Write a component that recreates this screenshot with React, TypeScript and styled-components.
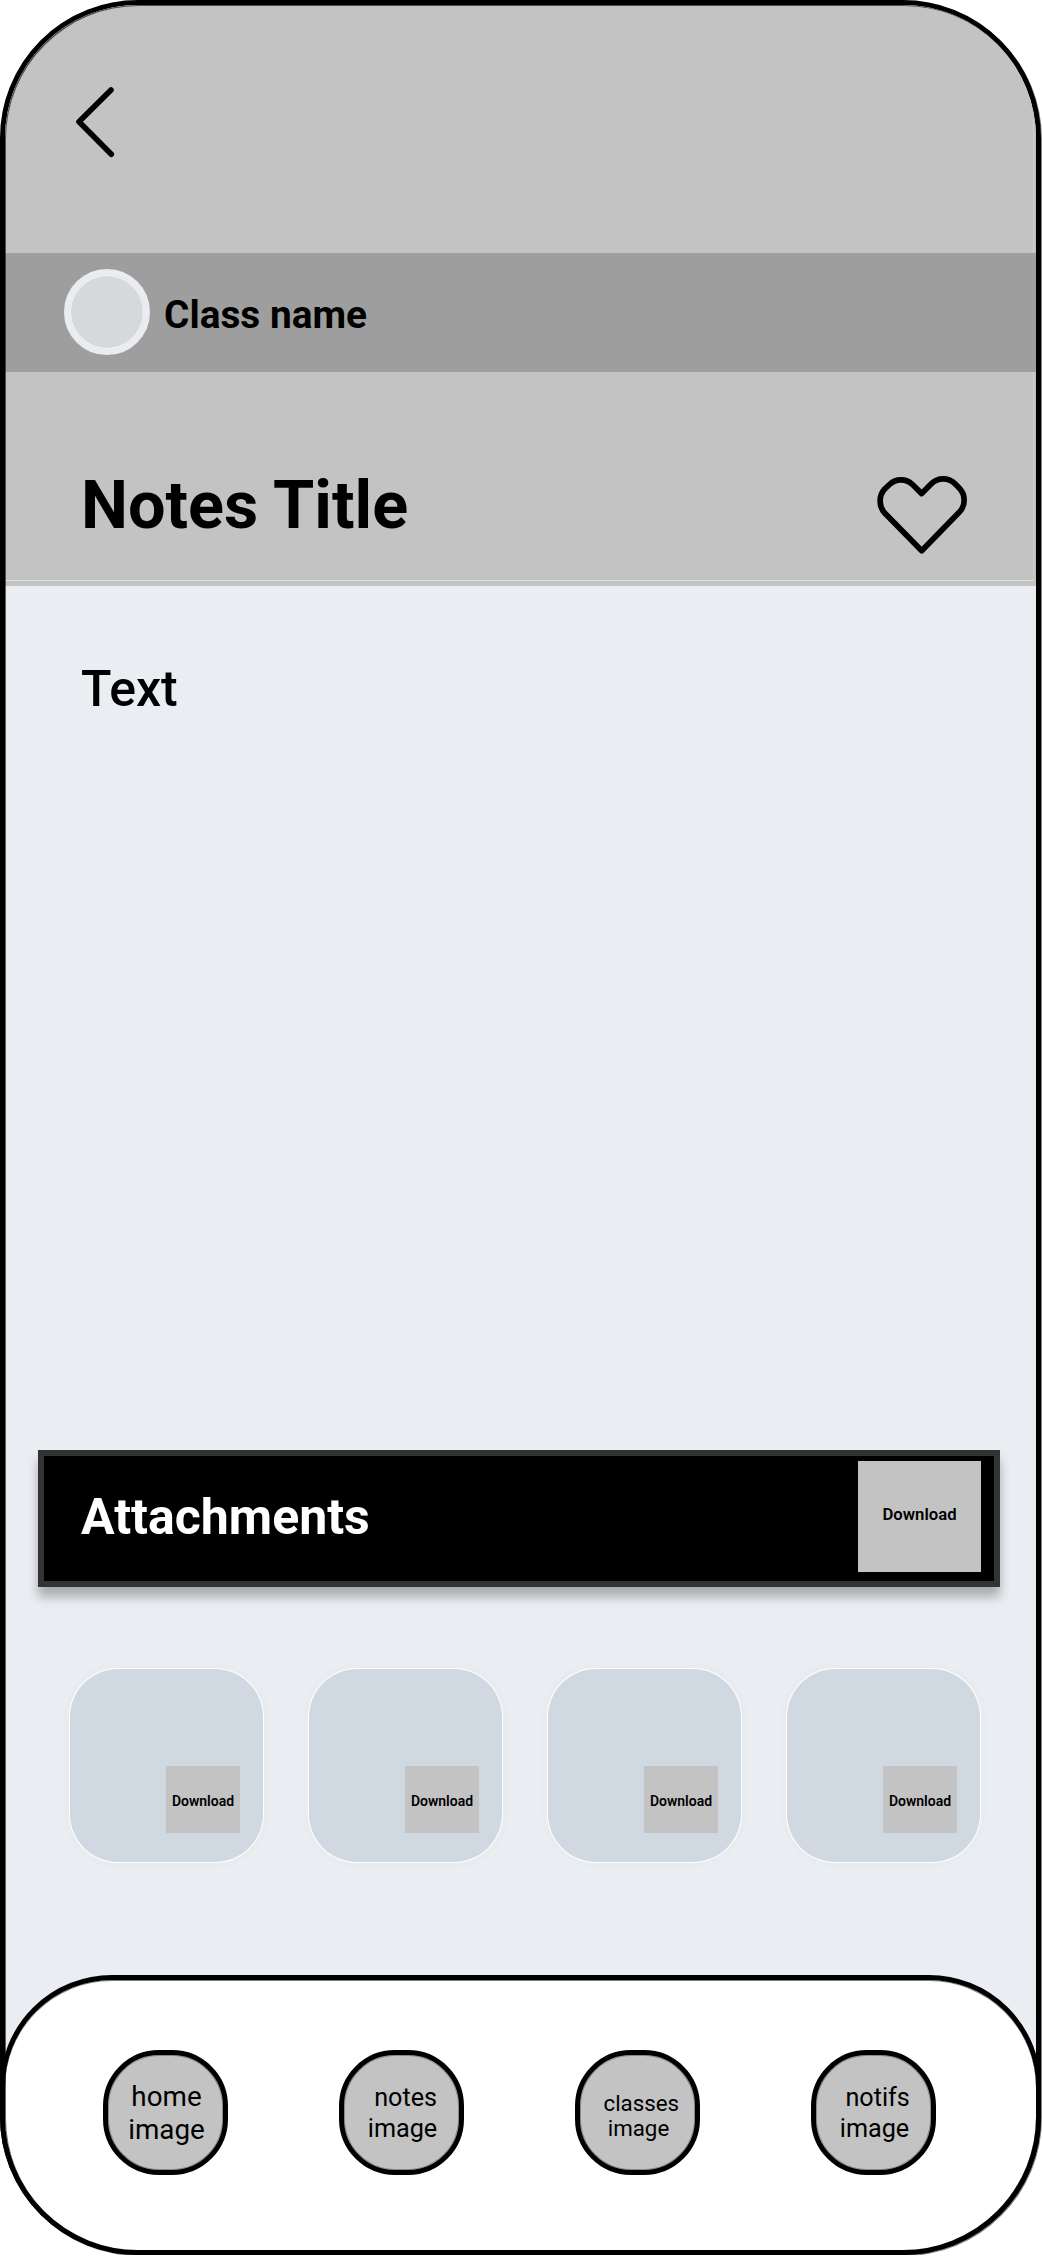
import React from "react";
import styled, { createGlobalStyle } from "styled-components";

const GlobalStyle = createGlobalStyle`
  * { box-sizing: border-box; }
  body { margin: 0; background: #fff; font-family: Roboto, "Liberation Sans", sans-serif; color: #000; }
  h1, h2, p { margin: 0; }
  button { font-family: inherit; color: inherit; padding: 0; border: 0; }
`;

const Phone = styled.main`
  position: relative;
  width: 1041px;
  height: 2255px;
  display: flex;
  flex-direction: column;
  border: 5px solid #000;
  border-radius: 138px;
  background: #eaeef2;
  box-shadow: 1px 1px 0 rgba(0, 0, 0, 0.5);

  &::after {
    content: "";
    position: absolute;
    inset: 0;
    border-radius: 133px;
    box-shadow: inset 1px 1px 0 rgba(0, 0, 0, 0.6);
    pointer-events: none;
  }
`;

const TopBar = styled.header`
  height: 248px;
  flex: none;
  padding: 82px 0 0 70px;
  border-radius: 133px 133px 0 0;
  background: linear-gradient(#d0d1d1, #d0d1d1) 1028px 115px / 1px 133px no-repeat #c3c3c3;
`;

const BackButton = styled.button`
  display: block;
  width: 40px;
  height: 72px;
  background: none;
`;

const ClassBand = styled.section`
  height: 119px;
  flex: none;
  display: flex;
  align-items: flex-start;
  gap: 14px;
  padding: 16px 0 0 59px;
  background: #9e9e9e;
`;

const Avatar = styled.div`
  width: 86px;
  height: 86px;
  border-radius: 50%;
  border: 6px solid #e9edf1;
  background: #d7d8da;
  box-shadow: inset 0 0 0 1px #f4f5f6;
`;

const ClassName = styled.p`
  font-size: 38.8px;
  font-weight: 700;
  line-height: 44px;
  padding-top: 24px;
`;

const TitleBand = styled.section`
  height: 214px;
  flex: none;
  display: flex;
  justify-content: space-between;
  padding: 94px 69px 0 76px;
  background:
    linear-gradient(#dde2e1, #dde2e1) 0 208px / 1029px 1px no-repeat,
    linear-gradient(#d0d1d1, #d0d1d1) 1028px 0 / 1px 208px no-repeat,
    #c3c3c3;
`;

const Title = styled.h1`
  font-size: 66.6px;
  font-weight: 700;
  line-height: 78px;
`;

const HeartButton = styled.button`
  width: 92px;
  height: 82px;
  margin-top: 8px;
  background: none;
`;

const Content = styled.section`
  flex: 1;
  display: flex;
  flex-direction: column;
`;

const NoteText = styled.p`
  height: 864px;
  padding: 74px 76px 0;
  font-size: 50px;
  font-weight: 500;
  line-height: 58px;
`;

const AttachmentsBar = styled.div`
  width: 962px;
  height: 137px;
  margin-left: 33px;
  flex: none;
  display: flex;
  justify-content: space-between;
  padding: 5px 13px 0 37px;
  border: 6px solid #333;
  background: #000;
  box-shadow: 0 10px 10px rgba(0, 0, 0, 0.28);
`;

const AttachmentsTitle = styled.h2`
  padding-top: 27px;
  color: #fff;
  font-size: 50px;
  font-weight: 700;
  line-height: 58px;
`;

const DownloadButton = styled.button<{ $small?: boolean }>`
  width: ${(p) => (p.$small ? 74 : 123)}px;
  height: ${(p) => (p.$small ? 67 : 111)}px;
  font-size: ${(p) => (p.$small ? 14 : 16.7)}px;
  padding-top: ${(p) => (p.$small ? 2 : 0)}px;
  padding-bottom: ${(p) => (p.$small ? 0 : 5)}px;
  font-weight: 600;
  background: #c3c3c3;
`;

const Files = styled.div`
  display: flex;
  gap: 46px;
  padding: 82px 0 0 65px;
`;

const FileTile = styled.div`
  width: 193px;
  height: 193px;
  display: flex;
  justify-content: flex-end;
  align-items: flex-end;
  padding: 0 23px 29px 0;
  border-radius: 48px;
  background: #d0d8e1;
  box-shadow: 0 0 0 1px #fff, 0 0 0 6px #e8ecee;
`;

const Nav = styled.nav`
  height: 280px;
  flex: none;
  display: flex;
  gap: 111px;
  margin: 0 -5px -5px;
  padding: 70px 0 0 98px;
  border: 5px solid #000;
  border-radius: 112px 112px 138px 138px;
  background: #fff;
  box-shadow: inset 0 1px 0 rgba(0, 0, 0, 0.5);
`;

const NavButton = styled.button<{ $size: number; $line: number; $top: number }>`
  width: 125px;
  height: 125px;
  display: block;
  padding: ${(p) => p.$top}px 0 0 2px;
  border: 5px solid #000;
  border-radius: 56px;
  background: #c3c3c3;
  box-shadow: inset 0 0 0 1px rgba(0, 0, 0, 0.3);
  font-size: ${(p) => p.$size}px;
  line-height: ${(p) => p.$line}px;
  white-space: pre;
`;

const NavLabel = styled.span`
  display: flex;
  flex-direction: column;
  align-items: center;
  height: 100%;
`;

const navItems = [
  { lines: ["home", "image"], size: 27.8, line: 33.4, top: 25 },
  { lines: [" notes", "image"], size: 25.2, line: 31, top: 27 },
  { lines: [" classes", "image"], size: 22.3, line: 24.8, top: 36 },
  { lines: [" notifs", "image"], size: 25.2, line: 31, top: 27 },
];

const files = [1, 2, 3, 4];

export default function App() {
  return (
    <>
      <GlobalStyle />
      <Phone>
        <TopBar>
          <BackButton aria-label="Back">
            <svg width="40" height="72" viewBox="0 0 40 72" fill="none" stroke="#000" strokeWidth="5.6" strokeLinecap="round" strokeLinejoin="round">
              <path d="M36 3L4 34.7L36.3 67.3" />
            </svg>
          </BackButton>
        </TopBar>
        <ClassBand>
          <Avatar />
          <ClassName>Class name</ClassName>
        </ClassBand>
        <TitleBand>
          <Title>Notes Title</Title>
          <HeartButton aria-label="Favourite">
            <svg width="92" height="82" viewBox="0 0 92 82" fill="none" stroke="#000" strokeWidth="5.7" strokeLinejoin="round">
              <path d="M46.700 76.800L9.700 39C3.600 32.500 3.600 21.500 9.700 15L14.500 10.500C21 4.300 31 4.300 37.500 10.500L46.700 19.600L56.300 9.800C63 3.100 73.500 3.100 80 9.800L84.200 14C90.800 20.800 90.800 31.500 84.200 38.300Z" />
            </svg>
          </HeartButton>
        </TitleBand>
        <Content>
          <NoteText>Text</NoteText>
          <AttachmentsBar>
            <AttachmentsTitle>Attachments</AttachmentsTitle>
            <DownloadButton>Download</DownloadButton>
          </AttachmentsBar>
          <Files>
            {files.map((id) => (
              <FileTile key={id}>
                <DownloadButton $small>Download</DownloadButton>
              </FileTile>
            ))}
          </Files>
        </Content>
        <Nav>
          {navItems.map((item) => (
            <NavButton key={item.lines[0]} $size={item.size} $line={item.line} $top={item.top}>
              <NavLabel>
                {item.lines.map((line) => (
                  <span key={line}>{line}</span>
                ))}
              </NavLabel>
            </NavButton>
          ))}
        </Nav>
      </Phone>
    </>
  );
}
